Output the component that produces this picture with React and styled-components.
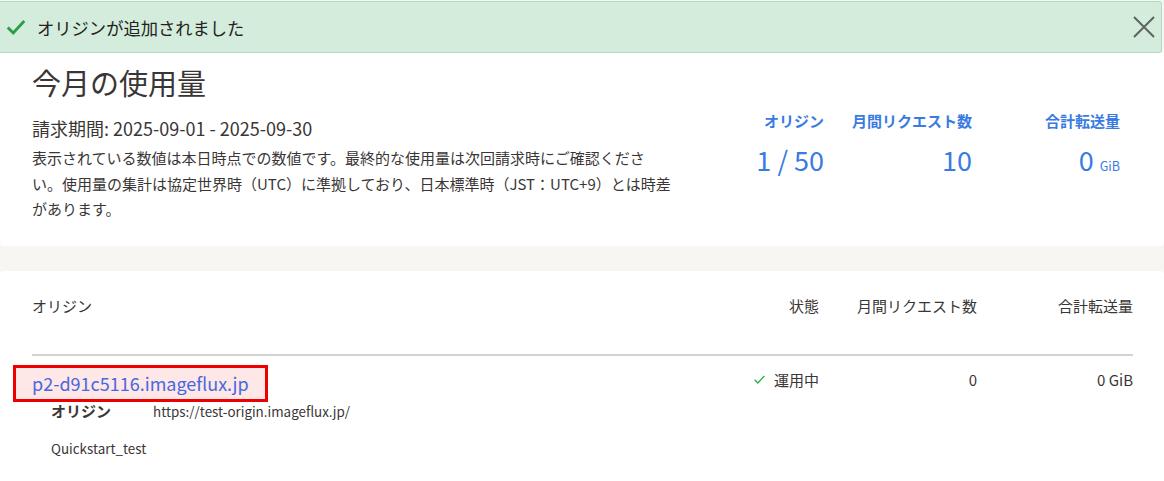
import React from "react";
import styled, { createGlobalStyle } from "styled-components";

const GlobalStyle = createGlobalStyle`
  body {
    margin: 0;
    background: #f7f6f3;
    font-family: "Noto Sans CJK JP", "Noto Sans", sans-serif;
    font-size: 15px;
    color: #3a3636;
  }
`;

const Alert = styled.div`
  display: flex;
  align-items: center;
  height: 50px;
  margin: 1px 2px 0 0;
  padding: 0 6px 0 5px;
  background: #d4ecdb;
  border: 1px solid #b2dcbd;
  border-left: none;
  border-radius: 0 3px 3px 0;
  font-size: 17.3px;
  color: #222;
`;

const AlertText = styled.span`
  flex: 1;
  margin-left: 10px;
`;

const CloseButton = styled.button`
  display: flex;
  background: none;
  border: none;
  padding: 0;
  cursor: pointer;
`;

const Card = styled.section`
  background: #fff;
  border-radius: ${({ top }) => (top ? "0 0 4px 4px" : "4px 4px 0 0")};
  padding: ${({ top }) => (top ? "9px 44px 24px 32px" : "23px 31px 24px 32px")};
  margin-bottom: ${({ top }) => (top ? "25px" : "0")};
`;

const SummaryRow = styled.div`
  display: flex;
  justify-content: space-between;
  align-items: flex-start;
`;

const SummaryText = styled.div`
  width: 640px;
`;

const Title = styled.h1`
  margin: 0;
  font-size: 29px;
  font-weight: 400;
  line-height: 40px;
`;

const Period = styled.h2`
  margin: 13px 0 0;
  font-size: 18px;
  font-weight: 400;
  line-height: 26px;
`;

const Note = styled.p`
  margin: 4px 0 0;
  font-size: 15px;
  line-height: 25.5px;
`;

const Stats = styled.div`
  display: grid;
  grid-template-columns: repeat(3, 148px);
  align-content: start;
  margin-top: 47px;
  color: #3a7be2;
  text-align: right;
`;

const StatLabel = styled.div`
  font-size: 15px;
  font-weight: 700;
  line-height: 24px;
`;

const StatValue = styled.div`
  margin-top: 10px;
  font-size: 27px;
  line-height: 34px;
`;

const Unit = styled.span`
  margin-left: 6px;
  font-size: 12.5px;
`;

const Table = styled.div`
  display: grid;
  grid-template-columns: 1fr 120px 158px 156px;
`;

const HeadCell = styled.div`
  text-align: ${({ right }) => (right ? "right" : "left")};
  line-height: 24px;
  padding-bottom: 36px;
  border-bottom: 2px solid #d2d2d2;
`;

const Cell = styled.div`
  text-align: ${({ right }) => (right ? "right" : "left")};
  padding-top: 12px;
  line-height: 24px;
`;

const OriginLink = styled.a`
  display: inline-block;
  margin: -3px 0 0 -19px;
  padding: 2px 16px 3px;
  border: 3px solid #ee0000;
  background: #fde7e7;
  color: #4a68de;
  font-size: 18px;
  line-height: 26px;
  text-decoration: none;
`;

const Detail = styled.div`
  display: flex;
  padding-left: 19px;
  margin-top: ${({ gap }) => gap}px;
  line-height: 22px;
`;

const DetailKey = styled.span`
  width: 102px;
  font-weight: 700;
`;

// latin text renders a little narrower than the CJK text around it
const Latin = styled.span`
  font-size: 13.4px;
`;

const Status = styled.span`
  display: inline-flex;
  align-items: center;
  gap: 8px;
`;

const Check = ({ size, color, width }) => (
  <svg width={size} height={size} viewBox="0 0 24 24" fill="none">
    <path d="M3 12.5 L9 18.5 L21 5.5" stroke={color} strokeWidth={width} />
  </svg>
);

export default function App() {
  return (
    <>
      <GlobalStyle />
      <Alert>
        <Check size={22} color="#2aa044" width={3.2} />
        <AlertText>オリジンが追加されました</AlertText>
        <CloseButton aria-label="閉じる">
          <svg width="22" height="22" viewBox="0 0 22 22">
            <path d="M1 1 L21 21 M21 1 L1 21" stroke="#5f6461" strokeWidth="2" />
          </svg>
        </CloseButton>
      </Alert>

      <Card top>
        <SummaryRow>
          <SummaryText>
            <Title>今月の使用量</Title>
            <Period>請求期間: 2025-09-01 - 2025-09-30</Period>
            <Note>
              表示されている数値は本日時点での数値です。最終的な使用量は次回請求時にご確認くださ
              <br />
              い。使用量の集計は協定世界時（UTC）に準拠しており、日本標準時（JST：UTC+9）とは時差があります。
            </Note>
          </SummaryText>
          <Stats>
            <StatLabel>オリジン</StatLabel>
            <StatLabel>月間リクエスト数</StatLabel>
            <StatLabel>合計転送量</StatLabel>
            <StatValue>1 / 50</StatValue>
            <StatValue>10</StatValue>
            <StatValue>
              0<Unit>GiB</Unit>
            </StatValue>
          </Stats>
        </SummaryRow>
      </Card>

      <Card>
        <Table>
          <HeadCell>オリジン</HeadCell>
          <HeadCell right>状態</HeadCell>
          <HeadCell right>月間リクエスト数</HeadCell>
          <HeadCell right>合計転送量</HeadCell>

          <Cell>
            <OriginLink href="#">p2-d91c5116.imageflux.jp</OriginLink>
            <Detail gap={-2}>
              <DetailKey>オリジン</DetailKey>
              <Latin>https://test-origin.imageflux.jp/</Latin>
            </Detail>
            <Detail gap={15}>
              <Latin>Quickstart_test</Latin>
            </Detail>
          </Cell>
          <Cell right>
            <Status>
              <Check size={13} color="#22b04a" width={2.4} />
              運用中
            </Status>
          </Cell>
          <Cell right>0</Cell>
          <Cell right>0 GiB</Cell>
        </Table>
      </Card>
    </>
  );
}
